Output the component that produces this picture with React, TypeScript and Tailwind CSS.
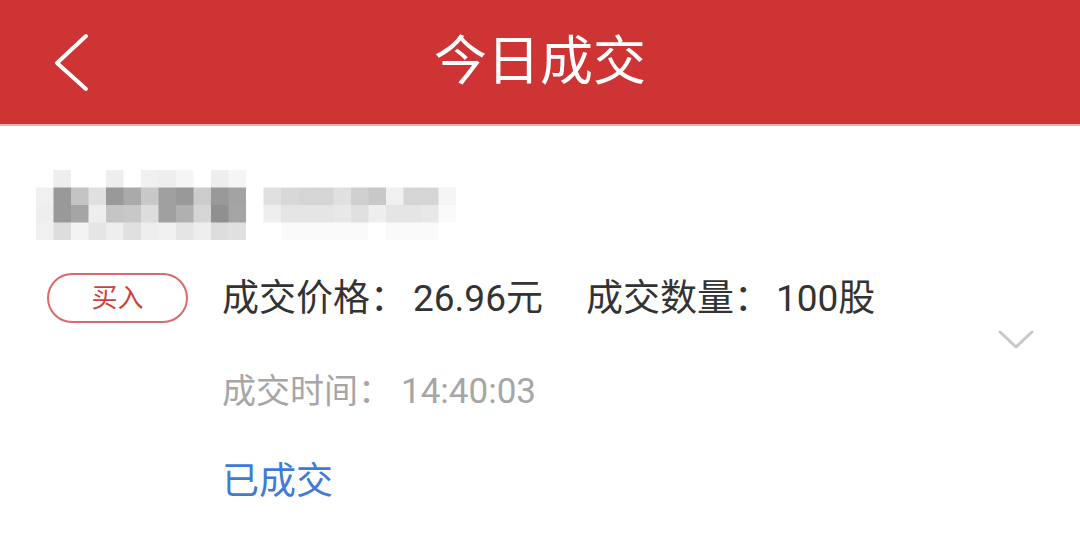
import React from "react";

const W = "#ffffff";

// pixelated (blurred-out) stock name
const mosaic: string[][] = [
    [W, "#eeeeee", W, W, "#eeeeee", W, "#f0f0f0", "#eeeeee", "#f5f5f5", W, "#eeeeee", "#f5f5f5",
     W, W, W, W, W, W, W, W, W, W, W, W],
    ["#f0f0f0", "#999999", "#c4c4c4", "#e0e0e0", "#999999", "#aaaaaa", "#c8c8c8", "#a0a0a0", "#999999", "#cccccc", "#999999", "#a3a3a3",
     W, "#e0e0e0", "#d8d8d8", "#d5d5d5", "#d5d5d5", "#e0e0e0", "#d0d0d0", "#c8c8c8", "#f0f0f0", "#d5d5d5", "#d5d5d5", "#f5f5f5"],
    ["#eeeeee", "#999999", "#a5a5a5", "#eeeeee", "#c5c5c5", "#c8c8c8", "#dddddd", "#a0a0a0", "#b0b0b0", "#d5d5d5", "#909090", "#a5a5a5",
     W, "#eeeeee", "#e5e5e5", "#e5e5e5", "#e5e5e5", "#e8e8e8", "#e0e0e0", "#eeeeee", "#e5e5e5", "#e5e5e5", "#e8e8e8", "#fafafa"],
    ["#f0f0f0", "#dddddd", "#f3f3f3", "#e5e5e5", "#eeeeee", "#e0e0e0", "#eeeeee", "#f0f0f0", "#e5e5e5", "#eeeeee", "#dddddd", "#e0e0e0",
     W, W, "#fafafa", "#fafafa", "#fafafa", "#fafafa", "#fafafa", W, "#fafafa", "#fafafa", "#fafafa", W],
];

const CELL = 17.5;

const NameMosaic = () => (
    <svg width={24 * CELL} height={4 * CELL} viewBox={`0 0 ${24 * CELL} ${4 * CELL}`} className="block">
        {mosaic.map((row, r) =>
            row.map((c, i) => (
                <rect key={`${r}-${i}`} x={i * CELL} y={r * CELL} width={CELL + 0.5} height={CELL + 0.5} fill={c} />
            ))
        )}
    </svg>
);

const App = () => {
    return (
        <div
            className="w-[1080px] h-[543px] bg-white overflow-hidden"
            style={{ fontFamily: 'Roboto, "Noto Sans CJK SC", sans-serif' }}
        >
            <header className="h-[124px] bg-[#cd3433] flex items-center">
                <div className="w-[160px] pl-[54px] flex items-center">
                    <svg width="36" height="60" viewBox="0 0 36 60" fill="none">
                        <path d="M32 4 L3 31 L32 57" stroke="#ffffff" strokeWidth="4" strokeLinecap="round" strokeLinejoin="round" />
                    </svg>
                </div>
                <h1 className="flex-1 text-center text-white text-[53px] leading-none font-normal">今日成交</h1>
                <div className="w-[160px]" />
            </header>
            <div className="h-[2px] bg-[#ecb4b4]" />

            <div className="pt-[44px] pl-[36px]">
                <NameMosaic />
            </div>

            <div className="flex pt-[33px] pl-[47px] pr-[45px]">
                <div className="w-[141px] h-[50px] rounded-full border-2 border-[#d86a6a] flex items-center justify-center text-[#cc4040] text-[26px] leading-none">
                    买入
                </div>
                <div className="flex-1 pl-[34px] flex flex-col">
                    <div className="h-[50px] flex items-center text-[37px] text-[#333333] gap-[43px] leading-none">
                        <span>成交价格：<span className="ml-[6px]">26.96</span>元</span>
                        <span>成交数量：<span className="ml-[5px]">100</span>股</span>
                    </div>
                    <div className="h-[50px] mt-[43px] flex items-center text-[34px] text-[#a6a6a6] leading-none">
                        成交时间：<span className="ml-[9px] text-[35px]">14:40:03</span>
                    </div>
                    <div className="h-[50px] mt-[40px] flex items-center text-[37px] text-[#3f7bd6] leading-none">
                        已成交
                    </div>
                </div>
                <div className="pt-[56px]">
                    <svg width="38" height="22" viewBox="0 0 38 22" fill="none">
                        <path d="M3 3 L19 18 L35 3" stroke="#c8c8c8" strokeWidth="3" strokeLinecap="round" strokeLinejoin="round" />
                    </svg>
                </div>
            </div>
        </div>
    );
};

export default App;
